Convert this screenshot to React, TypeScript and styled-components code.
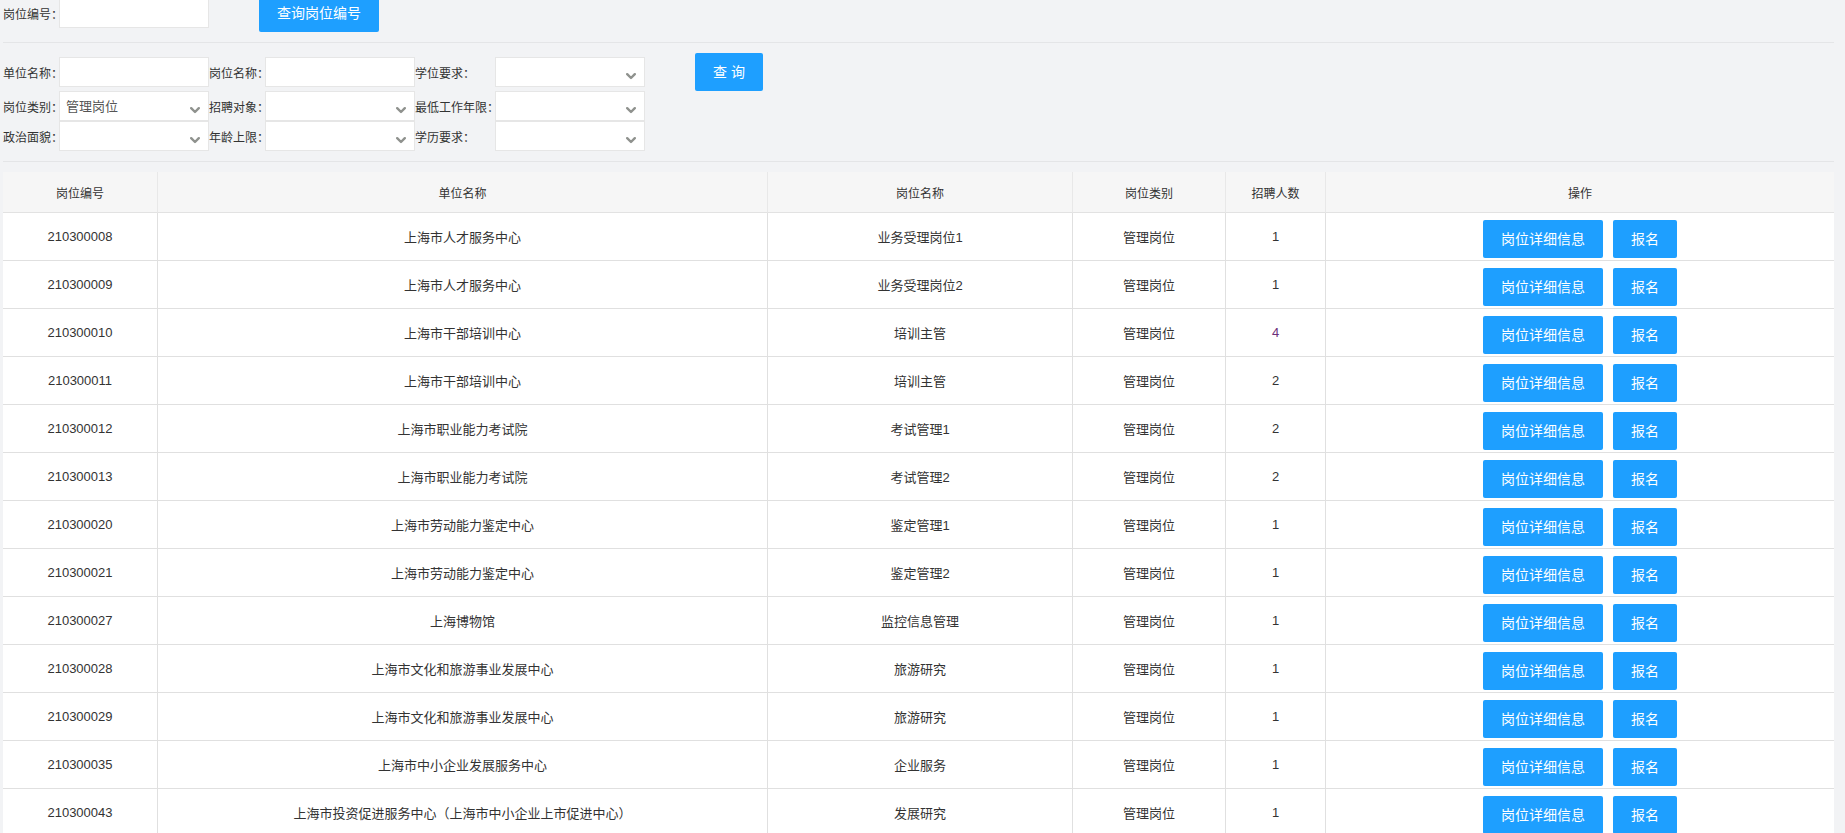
import React from "react";
import styled, { createGlobalStyle } from "styled-components";

interface Post {
  code: string;
  unit: string;
  name: string;
  type: string;
  count: number;
  highlight?: boolean;
}

const posts: Post[] = [
  { code: "210300008", unit: "上海市人才服务中心", name: "业务受理岗位1", type: "管理岗位", count: 1 },
  { code: "210300009", unit: "上海市人才服务中心", name: "业务受理岗位2", type: "管理岗位", count: 1 },
  { code: "210300010", unit: "上海市干部培训中心", name: "培训主管", type: "管理岗位", count: 4, highlight: true },
  { code: "210300011", unit: "上海市干部培训中心", name: "培训主管", type: "管理岗位", count: 2 },
  { code: "210300012", unit: "上海市职业能力考试院", name: "考试管理1", type: "管理岗位", count: 2 },
  { code: "210300013", unit: "上海市职业能力考试院", name: "考试管理2", type: "管理岗位", count: 2 },
  { code: "210300020", unit: "上海市劳动能力鉴定中心", name: "鉴定管理1", type: "管理岗位", count: 1 },
  { code: "210300021", unit: "上海市劳动能力鉴定中心", name: "鉴定管理2", type: "管理岗位", count: 1 },
  { code: "210300027", unit: "上海博物馆", name: "监控信息管理", type: "管理岗位", count: 1 },
  { code: "210300028", unit: "上海市文化和旅游事业发展中心", name: "旅游研究", type: "管理岗位", count: 1 },
  { code: "210300029", unit: "上海市文化和旅游事业发展中心", name: "旅游研究", type: "管理岗位", count: 1 },
  { code: "210300035", unit: "上海市中小企业发展服务中心", name: "企业服务", type: "管理岗位", count: 1 },
  {
    code: "210300043",
    unit: "上海市投资促进服务中心（上海市中小企业上市促进中心）",
    name: "发展研究",
    type: "管理岗位",
    count: 1,
  },
];

const Arrow = () => (
  <svg width="10" height="7" viewBox="0 0 10 7">
    <polyline
      points="1.2,1.2 5,5 8.8,1.2"
      fill="none"
      stroke="#8f928e"
      strokeWidth="2.4"
      strokeLinecap="round"
      strokeLinejoin="round"
    />
  </svg>
);

const Select: React.FC<{ value?: string }> = ({ value }) => (
  <SelectBox>
    <SelectValue>{value}</SelectValue>
    <Arrow />
  </SelectBox>
);

const App: React.FC = () => {
  return (
    <>
      <GlobalStyle />
      <Page>
        <TopBar>
          <Label>岗位编号：</Label>
          <TextInput />
          <Button>查询岗位编号</Button>
        </TopBar>
        <Divider />
        <Filters>
          <FormGrid>
            <FormRow gapBelow>
              <Label>单位名称：</Label>
              <TextInput />
              <Label>岗位名称：</Label>
              <TextInput />
              <Label>学位要求：</Label>
              <Select />
            </FormRow>
            <FormRow>
              <Label>岗位类别：</Label>
              <Select value="管理岗位" />
              <Label>招聘对象：</Label>
              <Select />
              <Label>最低工作年限：</Label>
              <Select />
            </FormRow>
            <FormRow>
              <Label>政治面貌：</Label>
              <Select />
              <Label>年龄上限：</Label>
              <Select />
              <Label>学历要求：</Label>
              <Select />
            </FormRow>
          </FormGrid>
          <Button>查 询</Button>
        </Filters>
        <Divider />
        <Table>
          <colgroup>
            <col style={{ width: 155 }} />
            <col style={{ width: 610 }} />
            <col style={{ width: 305 }} />
            <col style={{ width: 153 }} />
            <col style={{ width: 100 }} />
            <col style={{ width: 508 }} />
          </colgroup>
          <thead>
            <tr>
              <Th>岗位编号</Th>
              <Th>单位名称</Th>
              <Th>岗位名称</Th>
              <Th>岗位类别</Th>
              <Th>招聘人数</Th>
              <Th>操作</Th>
            </tr>
          </thead>
          <tbody>
            {posts.map((p) => (
              <tr key={p.code}>
                <Td>{p.code}</Td>
                <Td>{p.unit}</Td>
                <Td>{p.name}</Td>
                <Td>{p.type}</Td>
                <Td highlight={p.highlight}>{p.count}</Td>
                <ActionCell>
                  <Actions>
                    <Button>岗位详细信息</Button>
                    <Button>报名</Button>
                  </Actions>
                </ActionCell>
              </tr>
            ))}
          </tbody>
        </Table>
      </Page>
    </>
  );
};

export default App;

const GlobalStyle = createGlobalStyle`
  html, body {
    margin: 0;
    height: 100%;
    overflow: hidden;
    background: #f2f3f5;
  }
  body {
    font-family: "Liberation Sans", "Noto Sans CJK SC", sans-serif;
    color: #333;
  }
`;

const Page = styled.div`
  width: 1831px;
  padding-left: 3px;
  margin-top: -6px;
`;

const TopBar = styled.div`
  display: flex;
  align-items: center;
  height: 38px;

  & > button {
    margin-left: 50px;
  }
`;

const Divider = styled.div`
  height: 1px;
  background: #e4e5e7;
  margin: 10px 0;
`;

const Filters = styled.div`
  display: flex;
  align-items: flex-start;

  & > button {
    margin-left: 50px;
  }
`;

const FormGrid = styled.div`
  display: flex;
  flex-direction: column;
  margin-top: 4px;
`;

const FormRow = styled.div<{ gapBelow?: boolean }>`
  display: grid;
  grid-template-columns: 56px 150px 56px 150px 80px 150px;
  height: 30px;
  margin-bottom: ${(props) => (props.gapBelow ? "4px" : "0")};
`;

const Label = styled.label`
  display: flex;
  align-items: center;
  width: 56px;
  font-size: 12px;
  color: #333;
  white-space: nowrap;
  overflow: visible;

  ${FormRow} & {
    width: auto;
  }
`;

const TextInput = styled.input`
  box-sizing: border-box;
  width: 150px;
  height: 30px;
  border: 1px solid #e6e6e6;
  background: #fff;
  outline: none;
  padding: 0 7px;
  position: relative;
  z-index: 1;
`;

const SelectBox = styled.div`
  box-sizing: border-box;
  width: 150px;
  height: 30px;
  border: 1px solid #e6e6e6;
  background: #fff;
  display: flex;
  align-items: center;
  padding: 0 8px 0 6px;
  position: relative;
  z-index: 1;

  svg {
    align-self: flex-end;
    margin-bottom: 6px;
    flex-shrink: 0;
  }
`;

const SelectValue = styled.span`
  flex: 1;
  font-size: 13px;
  color: #555;
  margin-top: -1px;
`;

const Button = styled.button`
  height: 38px;
  padding: 0 18px;
  border: none;
  border-radius: 2px;
  background: #1e9fff;
  color: #fff;
  font-family: "Liberation Sans", "Noto Sans CJK SC", sans-serif;
  font-size: 14px;
  line-height: 38px;
  white-space: nowrap;
  cursor: pointer;
  flex-shrink: 0;
`;

const Table = styled.table`
  width: 1831px;
  table-layout: fixed;
  border-collapse: separate;
  border-spacing: 0;
  background: #fff;
`;

const Th = styled.th`
  height: 40px;
  padding: 0;
  background: #f6f6f6;
  font-size: 12px;
  font-weight: normal;
  color: #333;
  text-align: center;
  border-bottom: 1px solid #e2e2e2;
  border-right: 1px solid #e8e8e8;

  &:last-child {
    border-right: none;
  }
`;

const Td = styled.td<{ highlight?: boolean }>`
  height: 47px;
  padding: 0;
  font-size: 13px;
  color: ${(props) => (props.highlight ? "#6b2f7a" : "#333")};
  text-align: center;
  vertical-align: middle;
  border-bottom: 1px solid #e0e0e0;
  border-right: 1px solid #e0e0e0;
`;

const ActionCell = styled.td`
  height: 40px;
  padding: 7px 0 0;
  vertical-align: top;
  border-bottom: 1px solid #e0e0e0;
`;

const Actions = styled.div`
  display: flex;
  justify-content: center;
  gap: 10px;
`;
